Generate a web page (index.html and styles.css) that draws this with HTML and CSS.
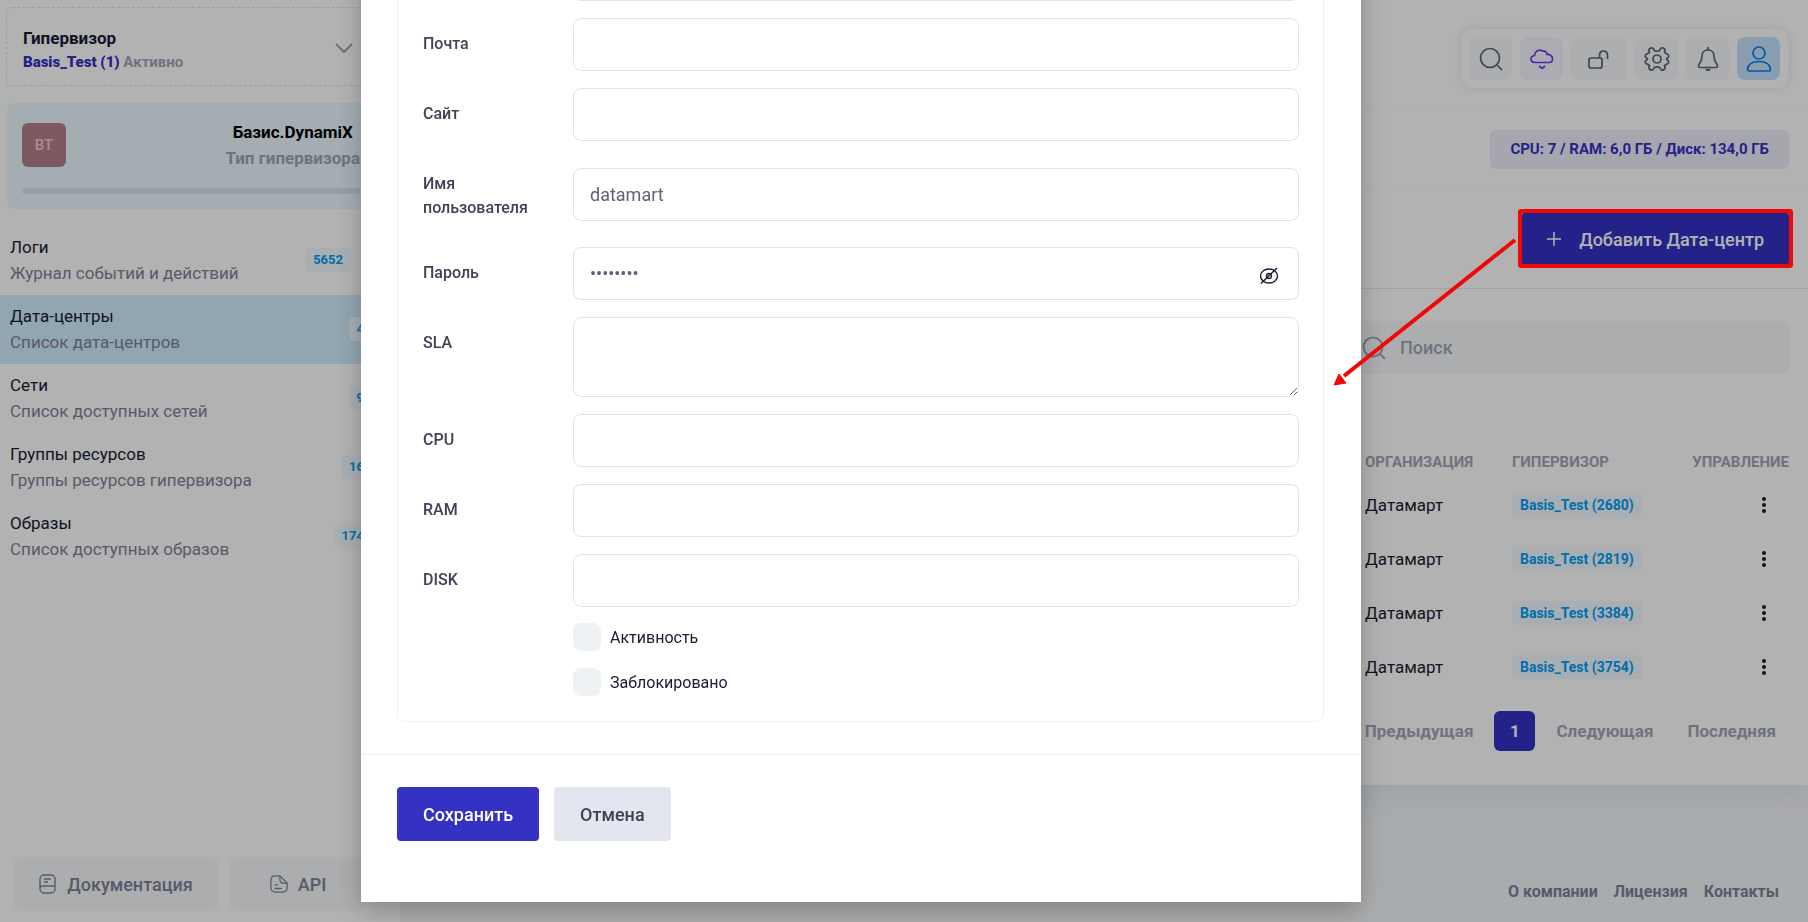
FILE: index.html
```html
<!DOCTYPE html>
<html lang="ru">
<head>
    <meta charset="UTF-8">
    <meta name="viewport" content="width=device-width, initial-scale=1.0">
    <title>Дата-центры</title>
    <link rel="stylesheet" href="styles.css">
</head>
<body>

<div class="page">
    <aside class="sidebar">
        <button class="switcher" type="button">
            <span class="switcher-text">
                <span class="switcher-title">Гипервизор</span>
                <span class="switcher-sub"><b>Basis_Test (1)</b> Активно</span>
            </span>
            <svg class="chevron" viewBox="0 0 20 12"><path d="M2 2l8 8 8-8"/></svg>
        </button>

        <div class="type-card">
            <div class="type-row">
                <span class="avatar">BT</span>
                <div class="type-text">
                    <div class="type-name">Базис.DynamiX</div>
                    <div class="type-sub">Тип гипервизора</div>
                </div>
            </div>
            <div class="progress"></div>
        </div>

        <nav class="menu">
            <a href="#" class="menu-item menu-item-log">
                <span><span class="menu-title">Логи</span><span class="menu-sub">Журнал событий и действий</span></span>
                <span class="badge">5652</span>
            </a>
            <a href="#" class="menu-item active">
                <span><span class="menu-title">Дата-центры</span><span class="menu-sub">Список дата-центров</span></span>
                <span class="badge">4</span>
            </a>
            <a href="#" class="menu-item">
                <span><span class="menu-title">Сети</span><span class="menu-sub">Список доступных сетей</span></span>
                <span class="badge">9</span>
            </a>
            <a href="#" class="menu-item">
                <span><span class="menu-title">Группы ресурсов</span><span class="menu-sub">Группы ресурсов гипервизора</span></span>
                <span class="badge">16</span>
            </a>
            <a href="#" class="menu-item">
                <span><span class="menu-title">Образы</span><span class="menu-sub">Список доступных образов</span></span>
                <span class="badge">174</span>
            </a>
        </nav>

        <div class="sidebar-footer">
            <a href="#" class="side-button side-button-docs">
                <svg class="side-icon" viewBox="0 0 18 20"><rect x="1" y="1" width="15" height="18" rx="4"/><path d="M1 14c0-1 1-2 3-2h12M5 5h7M5 8h4"/></svg>
                Документация
            </a>
            <a href="#" class="side-button side-button-api">
                <svg class="side-icon" viewBox="0 0 20 20"><path d="M11 1H6C3 1 1 3 1 6v8c0 3 2 5 5 5h8c3 0 5-2 5-5V9z"/><path d="M11 1v4c0 3 1 4 4 4h4M5 11h4M5 15h8"/></svg>
                API
            </a>
        </div>
    </aside>

    <main class="main">
        <div class="content">
            <header class="header">
                <div class="toolbar">
                    <button class="tool" type="button" aria-label="Найти">
                        <svg viewBox="0 0 24 24"><circle cx="11" cy="11" r="9.5"/><path d="M18 18l5 5"/></svg>
                    </button>
                    <button class="tool tool-cloud" type="button" aria-label="Облако">
                        <svg viewBox="0 0 24 24"><path d="M5 15.500c-5 0-5.500-6.500-.5-7C5 4 9 2 12.500 4c2-.3 4.500 1 4.500 3.500 2-.3 5.500 1 5.500 4.500 0 2.500-1.500 3.500-3.500 3.500z"/><path d="M9 19l3 2.500 3-2.500"/></svg>
                    </button>
                    <button class="tool tool-lock" type="button" aria-label="Блокировка">
                        <svg viewBox="0 0 24 24"><rect x="2" y="11" width="13" height="10" rx="2"/><path d="M12.500 11V8.500c0-6 8-6 8 0V12"/></svg>
                    </button>
                    <button class="tool" type="button" aria-label="Настройки">
                        <svg class="gear" viewBox="0 0 26 26"><circle cx="13" cy="13" r="4"/><path d="M10.300 4.400C9.500 2 7.700 1.300 6.200 2.300 4.600 3.300 4.700 4.800 5.500 6.300 4.700 7.400 3.500 7.700 2.700 8 1 8.600 1 11 2 11.600 4 12.300 4 13.700 2 14.400 1 15 1 17.400 2.700 18c.8.3 2 .6 2.800 1.700-.8 1.500-.9 3 .7 4 1.500 1 3.300.3 4.100-2.100 1.700-.8 3.700-.8 5.400 0 .8 2.400 2.600 3.100 4.100 2.100 1.600-1 1.500-2.500.7-4 .8-1.100 2-1.400 2.800-1.700 1.700-.6 1.700-3 .7-3.600-2-.7-2-2.100 0-2.800 1-.6 1-3-.7-3.600-.8-.3-2-.6-2.800-1.700.8-1.500.9-3-.7-4-1.500-1-3.300-.3-4.100 2.100-1.700.8-3.700.8-5.400 0z"/></svg>
                    </button>
                    <button class="tool" type="button" aria-label="Уведомления">
                        <svg viewBox="0 0 24 24"><path d="M12 0v3M12 3C8 3 6 6 6 9c0 4-1 6-3 8.500C2 19 2.500 20.500 4 20.500h16c1.500 0 2-1.500 1-3C19 15 18 13 18 9c0-3-2-6-6-6z"/><path d="M10 22c.8 1.500 3.200 1.500 4 0"/></svg>
                    </button>
                    <button class="tool tool-user" type="button" aria-label="Профиль">
                        <svg class="gear" viewBox="0 0 26 26"><circle cx="13" cy="7" r="6"/><path d="M3 25c-1.500 0-1.500-1-1.500-1.500C2 18 7 15.500 13 15.500S24 18 24.500 23.500c0 .5 0 1.500-1.500 1.500z"/></svg>
                    </button>
                </div>
            </header>

            <div class="limits">
                <span class="limits-badge">CPU: 7 / RAM: 6,0 ГБ / Диск: 134,0 ГБ</span>
            </div>

            <div class="actions">
                <button class="add-button" type="button">
                    <svg class="plus" viewBox="0 0 14 14"><path d="M7 0v14M0 7h14"/></svg>
                    Добавить Дата-центр
                </button>
            </div>

            <div class="list">
                <div class="search">
                    <svg class="search-icon" viewBox="0 0 24 24"><circle cx="11" cy="11" r="9.500"/><path d="M18 18l5 5"/></svg>
                    <input class="search-input" type="text" placeholder="Поиск" aria-label="Поиск">
                </div>

                <table class="table">
                    <thead>
                        <tr><th></th><th class="col-org">Организация</th><th class="col-hyper">Гипервизор</th><th class="col-manage">Управление</th></tr>
                    </thead>
                    <tbody>
                        <tr><td></td><td>Датамарт</td><td><span class="badge">Basis_Test (2680)</span></td><td class="cell-manage"><button class="dots" type="button" aria-label="Меню"><svg viewBox="0 0 4 16"><circle cx="2" cy="2" r="2"/><circle cx="2" cy="8" r="2"/><circle cx="2" cy="14" r="2"/></svg></button></td></tr>
                        <tr><td></td><td>Датамарт</td><td><span class="badge">Basis_Test (2819)</span></td><td class="cell-manage"><button class="dots" type="button" aria-label="Меню"><svg viewBox="0 0 4 16"><circle cx="2" cy="2" r="2"/><circle cx="2" cy="8" r="2"/><circle cx="2" cy="14" r="2"/></svg></button></td></tr>
                        <tr><td></td><td>Датамарт</td><td><span class="badge">Basis_Test (3384)</span></td><td class="cell-manage"><button class="dots" type="button" aria-label="Меню"><svg viewBox="0 0 4 16"><circle cx="2" cy="2" r="2"/><circle cx="2" cy="8" r="2"/><circle cx="2" cy="14" r="2"/></svg></button></td></tr>
                        <tr><td></td><td>Датамарт</td><td><span class="badge">Basis_Test (3754)</span></td><td class="cell-manage"><button class="dots" type="button" aria-label="Меню"><svg viewBox="0 0 4 16"><circle cx="2" cy="2" r="2"/><circle cx="2" cy="8" r="2"/><circle cx="2" cy="14" r="2"/></svg></button></td></tr>
                    </tbody>
                </table>

                <nav class="pagination">
                    <a href="#">Предыдущая</a>
                    <a href="#" class="current">1</a>
                    <a href="#">Следующая</a>
                    <a href="#">Последняя</a>
                </nav>
            </div>
        </div>

        <footer class="footer">
            <a href="#">О компании</a>
            <a href="#">Лицензия</a>
            <a href="#">Контакты</a>
        </footer>
    </main>
</div>

<div class="overlay">
    <form class="modal">
        <div class="modal-body">
            <div class="fields">
                <div class="field">
                    <span></span>
                    <input class="control" type="text" aria-label="Телефон">
                </div>
                <div class="field">
                    <label for="email">Почта</label>
                    <input class="control" type="text" id="email">
                </div>
                <div class="field">
                    <label for="site">Сайт</label>
                    <input class="control" type="text" id="site">
                </div>
                <div class="field">
                    <label for="user">Имя пользователя</label>
                    <input class="control" type="text" id="user" value="datamart">
                </div>
                <div class="field">
                    <label for="password">Пароль</label>
                    <div class="password">
                        <input class="control" type="password" id="password" value="datamart">
                        <button class="eye" type="button" aria-label="Показать пароль">
                            <svg viewBox="0 0 20 18"><ellipse cx="10" cy="9" rx="8.500" ry="7"/><circle cx="10" cy="9" r="2.500"/><path d="M2 16.500L18 1"/></svg>
                        </button>
                    </div>
                </div>
                <div class="field">
                    <label for="sla">SLA</label>
                    <textarea class="control control-area" id="sla"></textarea>
                </div>
                <div class="field">
                    <label for="cpu">CPU</label>
                    <input class="control" type="text" id="cpu">
                </div>
                <div class="field">
                    <label for="ram">RAM</label>
                    <input class="control" type="text" id="ram">
                </div>
                <div class="field">
                    <label for="disk">DISK</label>
                    <input class="control" type="text" id="disk">
                </div>
            </div>
            <div class="checks">
                <div class="check">
                    <input type="checkbox" id="active">
                    <label for="active">Активность</label>
                </div>
                <div class="check">
                    <input type="checkbox" id="blocked">
                    <label for="blocked">Заблокировано</label>
                </div>
            </div>
        </div>
        <div class="modal-footer">
            <button class="save" type="button">Сохранить</button>
            <button class="cancel" type="button">Отмена</button>
        </div>
    </form>
</div>

<!-- frame and arrow over the add button -->
<svg class="pointer" viewBox="0 0 500 400">
    <rect x="212" y="211" width="271" height="55" rx="1"/>
    <path d="M207 240L36 376"/>
    <path class="pointer-head" d="M26 385l5-11 7 9z"/>
</svg>

</body>
</html>
```
FILE: styles.css
```css
* {
    box-sizing: border-box;
}
body {
    margin: 0;
    font-family: Roboto, sans-serif;
    font-size: 16px;
    color: #181c32;
    background-color: #f3f6f9;
    overflow: hidden;
}
a {
    text-decoration: none;
}
button, input, textarea {
    font-family: inherit;
    font-size: 18px;
}
button {
    border: none;
    padding: 0;
    cursor: pointer;
}
svg {
    display: block;
    fill: none;
    stroke: currentColor;
}
.page {
    display: flex;
    height: 100vh;
}

/* Sidebar */
.sidebar {
    display: flex;
    flex-direction: column;
    width: 400px;
    padding: 7px 0 11px;
    background-color: #fff;
}
.switcher {
    display: flex;
    align-items: center;
    justify-content: space-between;
    height: 79px;
    margin: 0 25px 17px 6px;
    padding: 2px 16px 0;
    text-align: left;
    background-color: #fff;
    border: 1px dashed #dfe1ea;
    border-radius: 6px;
}
.switcher-text {
    padding-top: 4px;
}
.switcher-text span {
    display: block;
    line-height: 24px;
}
.switcher-title {
    font-size: 17px;
    font-weight: 700;
    color: #181c32;
}
.switcher-text .switcher-sub {
    font-size: 15px;
    font-weight: 700;
    color: #a1a5b7;
}
.switcher-sub b {
    color: #3431c3;
}
.chevron {
    width: 20px;
    height: 12px;
    margin-right: 4px;
    color: #a1a5b7;
    stroke-width: 2;
}
.type-card {
    height: 106px;
    margin: 0 25px 17px 7px;
    padding: 15px;
    background-color: #ebf9ff;
    border-radius: 8px;
}
.type-row {
    display: flex;
    justify-content: space-between;
    align-items: center;
    height: 54px;
}
.avatar {
    width: 44px;
    height: 44px;
    line-height: 44px;
    text-align: center;
    font-size: 15px;
    font-weight: 500;
    color: #f3c9d2;
    background-color: #b6808c;
    border-radius: 6px;
}
.type-text {
    text-align: center;
    line-height: 26px;
    font-size: 17px;
    font-weight: 700;
}
.type-name {
    color: #000;
}
.type-sub {
    color: #a1a5b7;
}
.progress {
    height: 6px;
    margin-top: 16px;
    background-color: #dbe3ec;
    border-radius: 3px;
}
.menu-item {
    display: flex;
    align-items: center;
    justify-content: space-between;
    height: 69px;
    padding: 0 28px 2px 10px;
}
.menu-item-log {
    padding-right: 49px;
}
.menu-item.active {
    background-color: #d0eefd;
}
.menu-title, .menu-sub {
    display: block;
    font-size: 17px;
    line-height: 26px;
    color: #181c32;
}
.menu-sub {
    color: #7e8299;
}
.badge {
    display: inline-block;
    height: 24px;
    padding: 0 8px;
    font-size: 14px;
    font-weight: 700;
    line-height: 24px;
    color: #009ef7;
    background-color: #f1faff;
    border-radius: 5px;
}
.menu .badge {
    font-size: 13px;
}
.sidebar-footer {
    display: flex;
    gap: 12px;
    margin-top: auto;
    padding: 0 34px 0 14px;
}
.side-button {
    display: flex;
    align-items: center;
    justify-content: center;
    gap: 10px;
    height: 54px;
    font-size: 18px;
    font-weight: 500;
    color: #7e8299;
    background-color: #f5f8fa;
    border-radius: 6px;
}
.side-button-docs {
    flex: 3;
}
.side-button-api {
    flex: 2;
}
.side-icon {
    width: 18px;
    height: 20px;
    stroke-width: 1.4;
}

/* Main part */
.main {
    display: flex;
    flex: 1;
    flex-direction: column;
}
.content {
    background-color: #fff;
    box-shadow: 0 10px 30px rgba(76, 87, 125, 0.1);
}
.header {
    display: flex;
    justify-content: flex-end;
    height: 108px;
    padding: 29px 19px 0;
    border-bottom: 1px solid #f9f9fb;
}
.toolbar {
    display: flex;
    gap: 8px;
    height: 59px;
    padding: 8px 9px 8px 8px;
    border-radius: 12px;
    box-shadow: 0 0 8px #dbe5f5;
}
.tool {
    display: flex;
    align-items: center;
    justify-content: center;
    width: 43px;
    height: 43px;
    color: #5e6278;
    background-color: #f5f8fa;
    border-radius: 8px;
}
.tool svg {
    width: 24px;
    height: 24px;
    stroke-width: 1.7;
}
.tool .gear {
    width: 26px;
    height: 26px;
}
.tool-cloud {
    color: #7239ea;
    background-color: #f8f5ff;
}
.tool-lock {
    width: 56px;
}
.tool-user {
    color: #0a7cf0;
    background-color: #c3e1fb;
}
.limits {
    display: flex;
    align-items: center;
    justify-content: flex-end;
    height: 82px;
    padding: 2px 19px 0;
    border-bottom: 1px solid #f9f9fb;
}
.limits-badge {
    padding: 0 20px;
    font-size: 15px;
    font-weight: 700;
    line-height: 39px;
    color: #3431c3;
    background-color: #eeeffa;
    border-radius: 6px;
}
.actions {
    display: flex;
    align-items: center;
    justify-content: flex-end;
    height: 99px;
    padding: 0 19px;
    border-bottom: 1px solid #e4e8ec;
}
.add-button {
    display: flex;
    align-items: center;
    gap: 18px;
    height: 54px;
    padding: 0 25px;
    font-weight: 500;
    color: #fff;
    background-color: #3431c3;
    border-radius: 4px;
}
.plus {
    width: 14px;
    height: 14px;
    stroke-width: 1.5;
}
.list {
    padding: 32px 19px 34px;
}
.search {
    display: flex;
    align-items: center;
    gap: 14px;
    width: 440px;
    height: 53px;
    margin-left: auto;
    padding: 0 13px;
    color: #a1a5b7;
    background-color: #f5f8fa;
    border-radius: 8px;
}
.search-icon {
    width: 24px;
    height: 24px;
    stroke-width: 2;
}
.search-input {
    flex: 1;
    min-width: 0;
    padding: 0;
    font-weight: 500;
    background: none;
    border: none;
}
.search-input::placeholder {
    color: #a1a5b7;
}
.table {
    width: 100%;
    margin-top: 71px;
    table-layout: fixed;
    border-collapse: collapse;
    text-align: left;
}
.table th {
    height: 33px;
    padding: 0;
    font-size: 15px;
    font-weight: 700;
    text-transform: uppercase;
    color: #a1a5b7;
}
.table td {
    height: 54px;
    padding: 0;
    font-size: 17px;
}
.table .col-org {
    width: 147px;
}
.table .col-hyper {
    width: 177px;
}
.table .col-manage {
    width: 100px;
    text-align: right;
}
.table .cell-manage {
    padding-right: 23px;
}
.dots {
    display: block;
    width: 4px;
    height: 16px;
    margin-left: auto;
    color: #181c32;
    background: none;
}
.dots svg {
    width: 4px;
    height: 16px;
    fill: currentColor;
    stroke: none;
}
.pagination {
    display: flex;
    justify-content: flex-end;
    gap: 8px;
    margin-top: 17px;
}
.pagination a {
    padding: 0 13px;
    font-size: 17px;
    font-weight: 700;
    line-height: 40px;
    color: #a1a5b7;
}
.pagination .current {
    width: 41px;
    padding: 0;
    text-align: center;
    color: #fff;
    background-color: #3431c3;
    border-radius: 6px;
}
.footer {
    display: flex;
    justify-content: flex-end;
    gap: 16px;
    margin-top: auto;
    padding: 0 29px 18px;
    line-height: 24px;
}
.footer a {
    font-weight: 700;
    color: #7e8299;
}

/* Modal */
.overlay {
    position: fixed;
    inset: 0;
    display: flex;
    align-items: flex-end;
    justify-content: center;
    padding: 0 86px 20px 0;
    overflow: hidden;
    background-color: rgba(0, 0, 0, 0.3);
}
.modal {
    width: 1000px;
    background-color: #fff;
    box-shadow: 0 8px 24px rgba(0, 0, 0, 0.25);
}
.modal-body {
    margin: 36px 37px 32px 36px;
    padding: 25px 24px 25px 25px;
    border: 1px solid #eff2f5;
    border-radius: 8px;
}
.fields, .checks {
    display: flex;
    flex-direction: column;
    gap: 17px;
}
.checks {
    margin-top: 16px;
}
.field {
    display: grid;
    grid-template-columns: 150px 1fr;
    align-items: center;
}
.field label {
    align-self: start;
    padding: 14px 30px 10px 0;
    font-weight: 500;
    line-height: 24px;
    color: #3f4254;
}
.control {
    display: block;
    width: 100%;
    height: 53px;
    padding: 0 16px;
    color: #5e6278;
    background-color: #fff;
    border: 1px solid #e1e3ea;
    border-radius: 8px;
}
.control-area {
    height: 80px;
    padding: 12px 16px;
    resize: vertical;
}
.password {
    position: relative;
}
.eye {
    position: absolute;
    top: 20px;
    right: 20px;
    color: #181c32;
    background: none;
}
.eye svg {
    width: 20px;
    height: 18px;
    stroke-width: 1.4;
}
.check {
    display: flex;
    align-items: center;
    gap: 9px;
    padding-left: 150px;
}
.check input {
    width: 28px;
    height: 28px;
    margin: 0;
    appearance: none;
    background-color: #eff2f5;
    border-radius: 8px;
}
.modal-footer {
    display: flex;
    gap: 15px;
    padding: 32px 36px 61px;
    border-top: 1px solid #eff2f5;
}
.save, .cancel {
    height: 54px;
    padding: 0 26px;
    font-weight: 500;
    color: #fff;
    background-color: #3431c3;
    border-radius: 4px;
}
.cancel {
    color: #3f4254;
    background-color: #e4e6ef;
}

.pointer {
    position: fixed;
    top: 0;
    right: 0;
    width: 500px;
    height: 400px;
    color: #f00808;
    stroke-width: 4;
    pointer-events: none;
}
.pointer-head {
    fill: currentColor;
    stroke-width: 1;
}
```
